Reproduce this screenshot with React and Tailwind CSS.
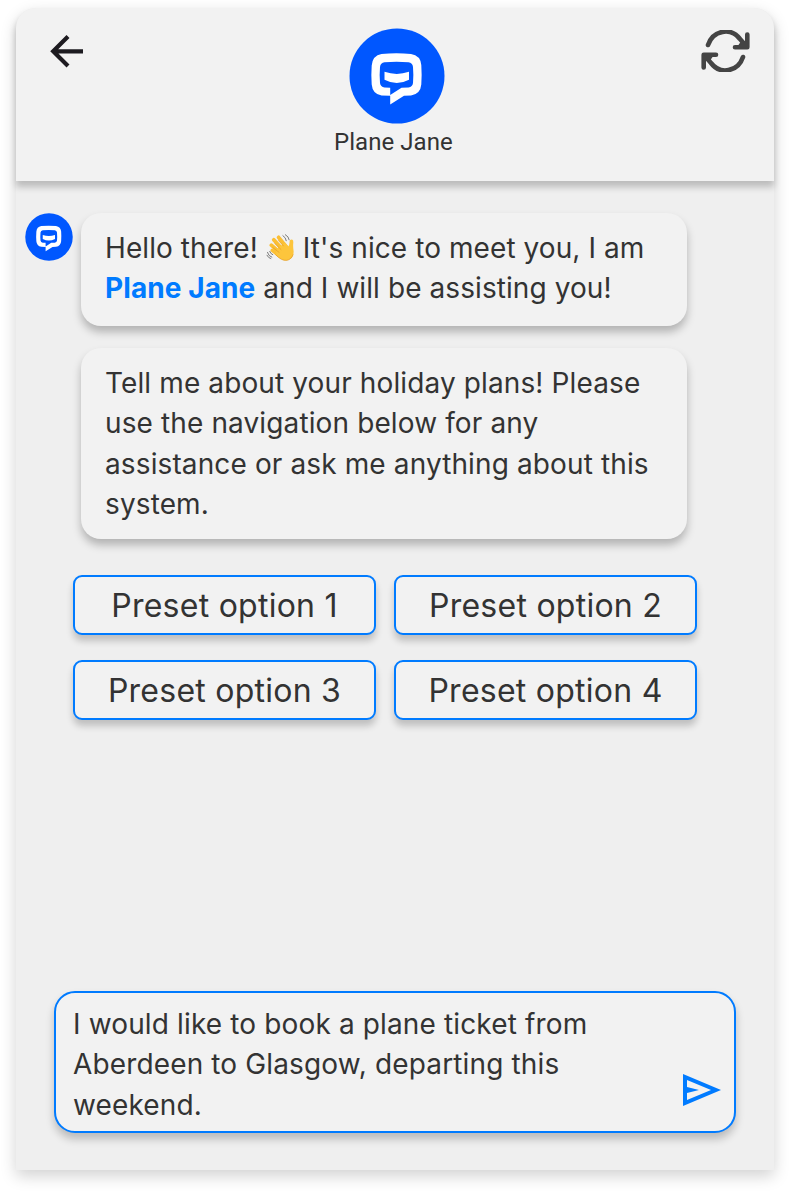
function ChatLogo({ className }) {
  return (
    <svg viewBox="0 0 96 96" className={className}>
      <circle cx="48" cy="48" r="47.5" fill="#0057ff" />
      <path
        fill="#fff"
        fillRule="evenodd"
        d="M32.500 26Q47.500 24.500 62 26Q71.500 27.500 72.300 37Q73 47 72.300 56.500Q71.500 66 62 67.500L55 67.800L41.200 76.500V67.800L32.500 67.500Q23.500 66 22.700 56.500Q22 47 22.700 37.500Q23.500 27.500 32.500 26ZM35.500 34.300Q31.500 34.800 31 39Q30.300 47 31 55Q31.500 58.800 35.500 59.500L41.200 59.700V67L52.500 59.700L59.500 59.500Q63.500 58.800 64 55Q64.700 47 64 39Q63.500 34.800 59.500 34.300Q47.500 33.300 35.500 34.300Z"
      />
      <path fill="#fff" d="M35.500 43.800Q47.800 48 60 43.800V51.800Q47.800 58.300 35.500 51.800Z" />
    </svg>
  );
}

function WavingHand() {
  return (
    <svg viewBox="0 0 30 30" className="inline-block h-[30px] w-[29px] align-[-5px]">
      <g stroke="#fbbf35" strokeLinecap="round" fill="none">
        <path d="M6.500 17.500L15 24" strokeWidth="3.600" />
        <path d="M5.500 12L16 21" strokeWidth="3.800" />
        <path d="M8 6.500L18.500 18" strokeWidth="3.900" />
        <path d="M13 4L22 15" strokeWidth="3.900" />
      </g>
      <path
        d="M12 15L20 9.500L23 13.500Q24.500 11.500 24.300 8.500Q25 5.500 27.300 6.500Q28.500 7.200 28.200 10Q27.800 14 28.600 18.500Q28.500 27 21 28Q15.500 28 9.500 21.500Z"
        fill="#fdc53c"
      />
      <g stroke="#e39a22" strokeWidth="0.700" strokeLinecap="round" fill="none">
        <path d="M7 14.500L13.500 19.500M9 10.200L15.500 16.500M12.800 7.200L18 12.800M10 22Q16 28.500 21.500 27.800Q26 27 28 22" />
      </g>
      <g stroke="#777" strokeWidth="1" strokeLinecap="round" fill="none">
        <path d="M17.500 2.200Q20.500 4 21 7.500M20 1.200Q23.500 3 24 6.500M1.500 19.500Q2.500 23.500 6 24.500M3.800 18.500Q4.500 21 7 22M1 22.500Q2.500 25.500 5 26" />
      </g>
    </svg>
  );
}

function Message({ className, children }) {
  return (
    <div className={`rounded-[20px] bg-[#f2f2f2] pl-6 text-[28px] leading-[40.4px] whitespace-nowrap shadow-[0_6px_8px_rgba(0,0,0,0.25)] ${className}`}>
      {children}
    </div>
  );
}

const options = ["Preset option 1", "Preset option 2", "Preset option 3", "Preset option 4"];

export default function App() {
  return (
    <div className="h-[1194px] w-[790px] overflow-hidden bg-white pt-2 pl-4 font-['Inter',sans-serif] text-[#333]">
      <main className="flex h-[1162px] w-[758px] flex-col rounded-t-[20px] bg-[#efefef] shadow-[0_6px_16px_rgba(0,0,0,0.18)]">
        <header className="grid h-[173px] grid-cols-[1fr_124px_1fr] rounded-t-[20px] bg-[#f2f2f2] shadow-[0_6px_7px_rgba(0,0,0,0.22)]">
          <button aria-label="Back" className="mt-[27px] ml-[34px] h-[33px] w-[33px]">
            <svg viewBox="0 0 33 33" className="h-full w-full" fill="none" stroke="#1d1b20" strokeWidth="4.200">
              <path d="M33 16.300H4M18 1.500L3.200 16.300L18 31" />
            </svg>
          </button>
          <div className="flex flex-col items-start pt-5">
            <ChatLogo className="ml-4 h-24 w-24" />
            <h1 className="mt-1 ml-px font-['Roboto',sans-serif] text-[24px] leading-[29px] tracking-[0.05px] whitespace-nowrap">Plane Jane</h1>
          </div>
          <button aria-label="Refresh" className="mt-[22px] mr-[24px] h-[42px] w-[49px] justify-self-end">
            <svg viewBox="0 0 49 42" className="h-full w-full" fill="none" stroke="#444" strokeWidth="4.600" strokeLinecap="round" strokeLinejoin="round">
              <path d="M7 15C12 0 30 -3 39 9L46 17M46.300 4.500V17.200H34M42 27C37 42 19 45 10 33L3 25M2.700 37.500V24.800H15" />
              <path d="M41 10L46 17L36 17ZM8 32L3 25L13 25Z" fill="#444" stroke="none" />
            </svg>
          </button>
        </header>

        <section className="mt-8 ml-[9px] flex gap-2">
          <ChatLogo className="h-12 w-12 shrink-0" />
          <div className="flex w-[606px] flex-col gap-[22px]">
            <Message className="h-[113px] pt-[15px] tracking-[0.08px]">
              Hello there! <WavingHand /> It's nice to meet you, I am<br />
              <strong className="font-bold text-[#007bff]">Plane Jane</strong> and I will be assisting you!
            </Message>
            <Message className="h-[191px] pt-[15px] tracking-[0.12px]">
              Tell me about your holiday plans! Please<br />
              use the navigation below for any<br />
              assistance or ask me anything about this<br />
              system.
            </Message>
          </div>
        </section>

        <nav className="mt-9 ml-[57px] grid w-[624px] grid-cols-2 gap-x-[18px] gap-y-[25px]">
          {options.map((label) => (
            <button key={label} className="h-[60px] rounded-[9px] border-2 border-[#007bff] bg-[#f2f2f2] pt-0.5 text-[32px] tracking-[0.25px] shadow-[0_6px_7px_rgba(0,0,0,0.2)]">
              {label}
            </button>
          ))}
        </nav>

        <form className="mt-auto mb-[37px] ml-[38px] flex h-[142px] w-[682px] items-start justify-between rounded-[21px] border-2 border-[#007bff] bg-[#f2f2f2] pt-[11px] pr-[13px] pl-[17px] shadow-[0_6px_8px_rgba(0,0,0,0.22)]">
          <p className="text-[28px] leading-[40.4px] tracking-[0.14px] whitespace-nowrap">
            I would like to book a plane ticket from<br />
            Aberdeen to Glasgow, departing this<br />
            weekend.
          </p>
          <button type="button" aria-label="Send" className="mt-[70px] h-8 w-[38px]">
            <svg viewBox="0 0 38 32" className="h-full w-full" fill="#007bff" fillRule="evenodd">
              <path d="M0 0L38 16L0 32ZM4 6V13L16 16L4 19V26L28 16Z" />
            </svg>
          </button>
        </form>
      </main>
    </div>
  );
}
